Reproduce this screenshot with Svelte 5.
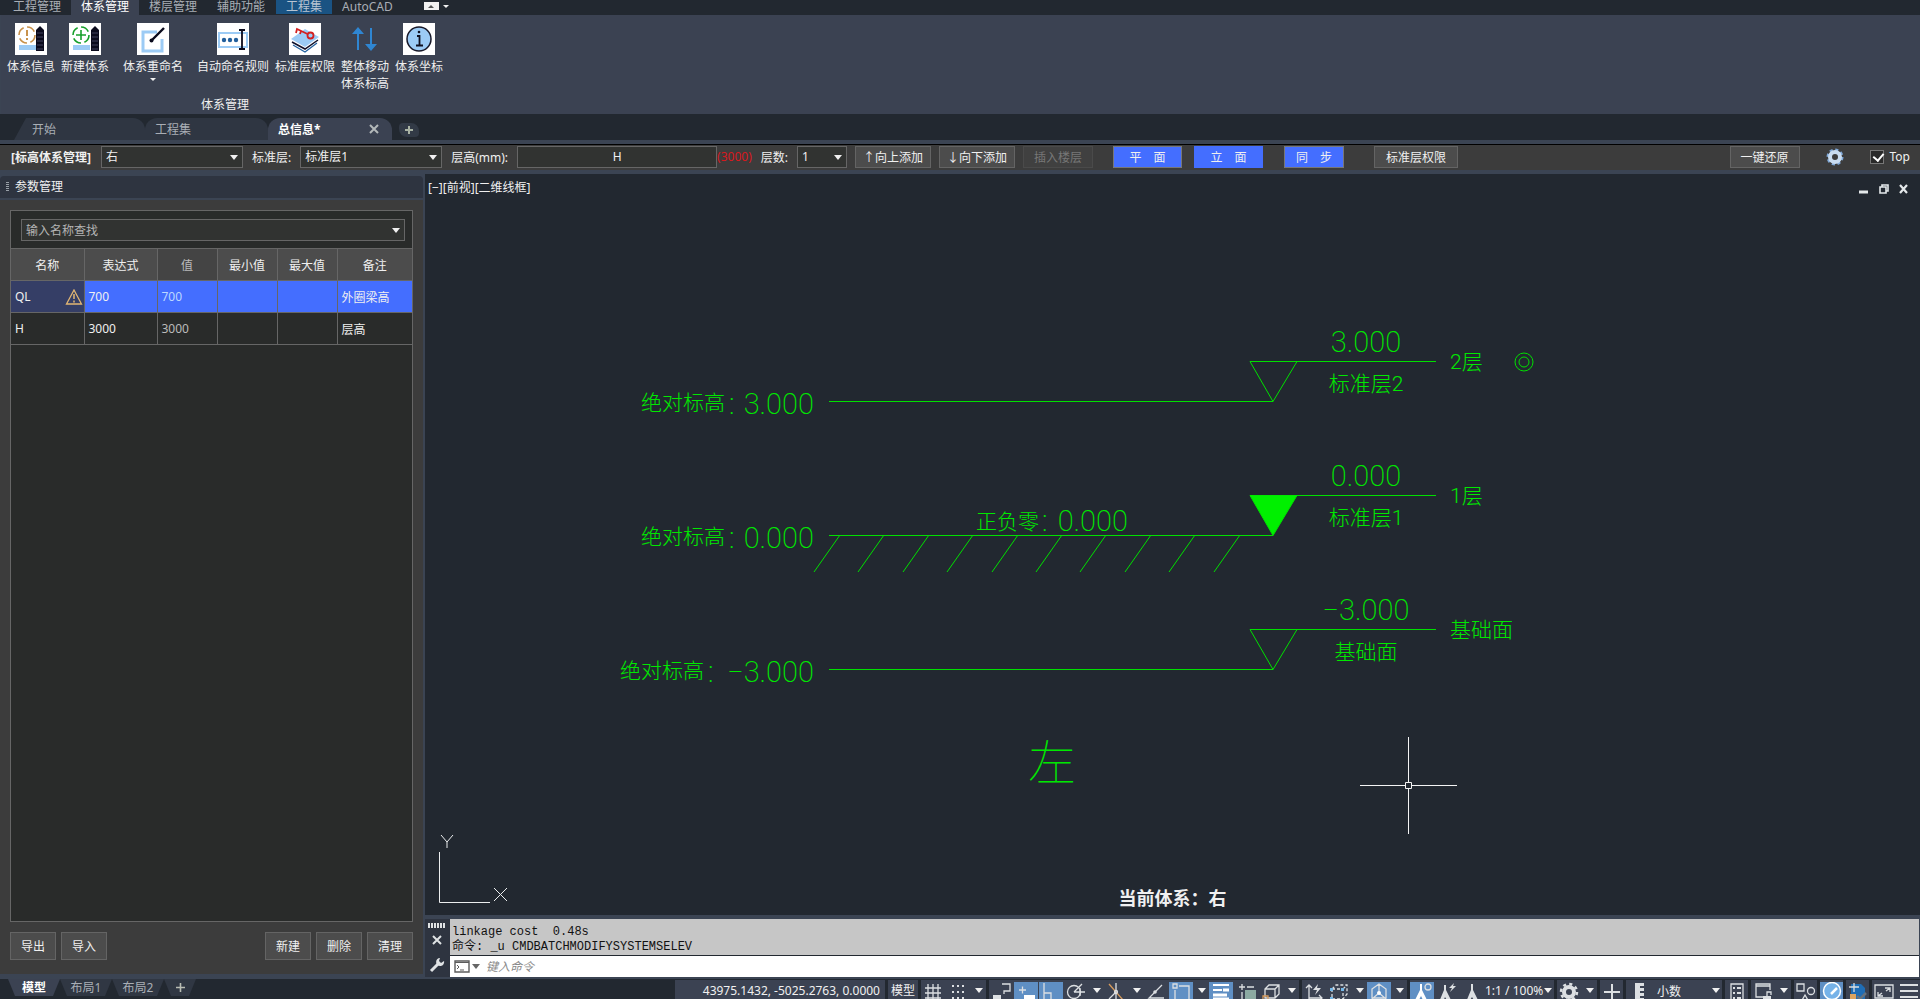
<script>
    const menuTabs = ["工程管理", "体系管理", "楼层管理", "辅助功能", "工程集", "AutoCAD"];

    const ribbonButtons = [
        { icon: "info", label: "体系信息", width: "w54" },
        { icon: "create", label: "新建体系", width: "w54" },
        { icon: "rename", label: "体系重命名", width: "w82", caret: true },
        { icon: "autoname", label: "自动命名规则", width: "w78" },
        { icon: "layers", label: "标准层权限", width: "w66" },
        { icon: "move", label: "整体移动体系标高", width: "w54" },
        { icon: "coord", label: "体系坐标", width: "w54" },
    ];

    const ribbonIcons = {
        info: `<rect width="32" height="32" fill="#fff"/><circle cx="12" cy="12" r="8" fill="none" stroke="#c8924c" stroke-width="1.6" stroke-dasharray="9 3.5"/><path d="M12 7v6M12 15v2" stroke="#c8924c" stroke-width="2"/><path d="M4 22h17v5H4z" fill="#9ccbf5"/><path d="M21 7l4-4 4 4v21h-8z" fill="#0a0a1c"/><path d="M22 10h6M22 14h6M22 18h6M22 22h6M22 26h6" stroke="#41415c"/>`,
        create: `<rect width="32" height="32" fill="#fff"/><circle cx="12" cy="12" r="8" fill="none" stroke="#18a02c" stroke-width="1.6" stroke-dasharray="9 3.5"/><path d="M12 7v10M7 12h10" stroke="#18a02c" stroke-width="1.6"/><path d="M4 22h17v5H4z" fill="#9ccbf5"/><path d="M22 7l4-4 4 4v21h-8z" fill="#0a0a1c"/><path d="M23 10h6M23 14h6M23 18h6M23 22h6M23 26h6" stroke="#41415c"/>`,
        rename: `<rect width="32" height="32" fill="#fff"/><path d="M20 9H6v19h19V16" fill="none" stroke="#9ccbf5" stroke-width="3"/><path d="M15 17L27 5" stroke="#0a0a1c" stroke-width="2.4"/><circle cx="14.500" cy="17.500" r="2" fill="#0a0a1c"/>`,
        autoname: `<rect width="32" height="32" fill="#fff"/><path d="M2 10h28v14H2z" fill="none" stroke="#9ccbf5" stroke-width="2"/><circle cx="7" cy="17" r="2.200" fill="#225f9c"/><circle cx="13" cy="17" r="2.200" fill="#225f9c"/><circle cx="19" cy="17" r="2.200" fill="#225f9c"/><path d="M25 7v18M22 7h6M22 26h6" stroke="#0a0a1c" stroke-width="1.800" fill="none"/>`,
        layers: `<rect width="32" height="32" fill="#fff"/><path d="M2 16l14-10 14 8-14 10z" fill="#9ccbf5"/><path d="M3 19l13 7 13-9" fill="none" stroke="#10102a" stroke-width="1.500"/><path d="M4 22l12 7 12-9" fill="none" stroke="#24629f" stroke-width="1.300"/><circle cx="21.500" cy="12.500" r="3" fill="none" stroke="#d42020" stroke-width="1.800"/><path d="M18.500 11L8 6l-1 4M12 8l-1 3" fill="none" stroke="#d42020" stroke-width="1.800"/>`,
        move: `<path d="M8 27V11H3l6-7 6 7h-5v16z" fill="#2f86d2"/><path d="M21 5v16h-5l6 7 6-7h-5V5z" fill="#2f86d2"/>`,
        coord: `<rect width="32" height="32" fill="#fff"/><circle cx="16" cy="16" r="12" fill="#9ccbf5" stroke="#181828" stroke-width="1.500"/><path d="M14 13h2.500v9M13 22.500h7" fill="none" stroke="#101020" stroke-width="1.800"/><circle cx="16" cy="9" r="1.300" fill="#101020"/>`,
    };

    let system = $state("右");
    let standard = $state("标准层1");
    let floors = $state("1");
    let stayOnTop = $state(true);

    const columns = ["名称", "表达式", "值", "最小值", "最大值", "备注"];
    const params = [
        { name: "QL", expr: "700", value: "700", note: "外圈梁高", warn: true, selected: true },
        { name: "H", expr: "3000", value: "3000", note: "层高" },
    ];

    // x is the start of the left caption, y the lower line of each elevation mark
    const levels = [
        { x: 216, y: 227, elev: "3.000", name: "标准层2", floor: "2层", current: true },
        { x: 216, y: 361, elev: "0.000", name: "标准层1", floor: "1层", zero: true },
        { x: 195, y: 495, elev: "−3.000", name: "基础面", floor: "基础面" },
    ];
    const hatches = Array.from({ length: 10 }, (_, i) => 415 + Math.round(i * 44.4));

    const s = `fill="none" stroke="#dcdfe2" stroke-width="1.3"`;
    const statusIcons = {
        grid: `<path d="M3 8h16M3 13h16M3 18h16M6 4v18M11 4v18M16 4v18" ${s}/>`,
        snap: `<path d="M5 6h12M5 12h12M5 18h12" ${s} stroke-dasharray="2 3" style="stroke-width:2"/>`,
        infer: `<path d="M12 4h8v7h-6v3" ${s}/><path d="M3 15h8v8H3z" fill="#dcdfe2"/>`,
        dyn: `<path d="M4 10h7M7.500 6.500v7" ${s}/><path d="M9 15h11v4H9z" fill="#fff"/>`,
        ortho: `<path d="M4 3v20M4 13h7v8" ${s}/>`,
        polar: `<circle cx="9" cy="12" r="6.500" ${s}/><path d="M9 12L17 4M9 12h11M15 8v8" ${s}/>`,
        iso: `<path d="M4 4l14 16" stroke="#d69a5c" stroke-width="1.300"/><path d="M11 3v18M11 12l-7 7" ${s}/><circle cx="11" cy="12" r="1.500" ${s}/>`,
        track: `<path d="M17 5L4 18h15" ${s}/><circle cx="10" cy="12" r="1.800" fill="#dcdfe2"/>`,
        osnap: `<path d="M3 4h4v4H3zM9 6h10v16M5 10v12" ${s}/>`,
        weight: `<path d="M3 5h16M3 10h9" stroke="#fff" stroke-width="2"/><path d="M3 15h14M3 19h16" stroke="#fff" stroke-width="3"/><path d="M13 10h6" stroke="#fff" stroke-width="3"/>`,
        transp: `<path d="M4 7h6M7 4v6" ${s}/><path d="M10 10h11v12H10z" fill="#8caaa2"/><path d="M12 7h7M7 12v9" ${s}/>`,
        cycle: `<path d="M5 9l4-4h10v9l-4 4H5zM5 9h10v9M15 9l4-4" ${s}/><path d="M3 16h5v6H3z" fill="none" stroke="#d69a5c" stroke-width="1.300"/>`,
        ucs: `<path d="M6 20V5M3 8l3-3 3 3M6 18h13M16 15l3 3-3 3" ${s}/><path d="M15 4l-5 6h4l-2 5 6-7h-4z" fill="#dcdfe2"/>`,
        cube: `<path d="M4 9l4-4h11v9l-4 5H4zM4 9h11v10M15 9l4-4" ${s} stroke-dasharray="3 2"/><path d="M2 8h3v3H2zM13 8h3v3h-3zM2 17h3v3H2z" fill="#74b7e8"/>`,
        gizmo: `<path d="M11 4v9l-7 6M11 13l7 6M4 9l7-5 7 5v9H4z" ${s}/><circle cx="11" cy="13" r="2" fill="#fff"/>`,
        annoVis: `<path d="M9 4v6L3 22h4l3-6 3 6h4l-6-12V4z" fill="#fff"/><circle cx="17" cy="7" r="3" ${s}/>`,
        annoAuto: `<path d="M8 5v5L3 22h4l2-5 3 5h4l-6-12V5z" fill="#dcdfe2"/><path d="M18 3l-5 5h3l-2 4 6-6h-3z" fill="#dcdfe2"/>`,
        anno: `<path d="M10 4v6L5 22h3l3-5 3 5h4l-6-12V4z" fill="#dcdfe2"/>`,
        gear: `<circle cx="11" cy="12" r="5" fill="none" stroke="#dcdfe2" stroke-width="4"/><circle cx="11" cy="12" r="8" fill="none" stroke="#dcdfe2" stroke-width="2.500" stroke-dasharray="3.100 3.180"/>`,
        plus: `<path d="M3 12h16M11 4v18" ${s} style="stroke-width:2"/>`,
        ruler: `<path d="M8 3h9v3h-4v2h4v3h-4v2h4v3h-4v2h4v5H8z" fill="#dcdfe2"/>`,
        list: `<path d="M5 4h12v20H5z" ${s}/><path d="M7 8h2M11 8h4M7 13h2M11 13h4M7 18h2M11 18h4" ${s} style="stroke-width:2"/>`,
        lock: `<path d="M11 17H4V4h14v6M4 6h14" ${s}/><path d="M11 16h8v6h-8z" fill="#dcdfe2"/><path d="M15 16v-4h4v3" ${s}/>`,
        shapes: `<path d="M2 4h7v7H2zM10 15l-4 7h8z" ${s}/><circle cx="16" cy="11" r="3.500" ${s}/>`,
        perf: `<circle cx="11" cy="11" r="8.500" fill="#76b2e8" stroke="#fff" stroke-width="1.500"/><path d="M10 14l6-6" stroke="#fff" stroke-width="2.500"/>`,
        drawing: `<path d="M4 4h10l4 4v12H4z" fill="#1f6db5"/><path d="M2 7h10M7 3v9" ${s}/><path d="M3 14h6v6H3z" fill="#dca460"/><path d="M10 16l3 3 6-6" fill="none" stroke="#66727e" stroke-width="2.500"/>`,
        full: `<path d="M2 5h18v13H2z" ${s}/><path d="M12 8h5v4M17 8l-4 3M5 12v4h5M5 16l4-3" ${s}/>`,
        menu: `<path d="M2 5h18M2 11h18M2 17h18" ${s} style="stroke-width:2"/>`,
    };

    const i = (icon, on = false) => ({ icon, on });
    const caret = { caret: true };
    const statusGroups = [
        [i("grid"), i("snap"), caret],
        [
            i("infer"), i("dyn", true), i("ortho", true), i("polar"), caret, i("iso"), caret,
            i("track"), i("osnap", true), caret, i("weight", true), i("transp"), i("cycle"), caret,
        ],
        [i("ucs"), i("cube"), caret, i("gizmo", true), caret],
        [i("annoVis", true), i("annoAuto"), i("anno"), { text: "1:1 / 100%" }],
        [i("gear"), caret],
        [i("plus")],
        [i("ruler"), { text: "小数", wide: true }],
        [i("list")],
        [i("lock"), caret],
        [i("shapes")],
        [i("perf", true)],
        [i("drawing")],
        [i("full"), i("menu")],
    ];
</script>

<div class="app">
    <nav class="menu">
        {#each menuTabs as tab, n}
            <button class:active={n === 1} class:blue={n === 4}>{tab}</button>
        {/each}
        <span class="collapse"><i></i></span>
        <i class="caret small"></i>
    </nav>

    <section class="ribbon">
        <div class="ribbon-group">
            <div class="ribbon-buttons">
                {#each ribbonButtons as b}
                    <button class={b.width}>
                        <svg width="32" height="32" viewBox="0 0 32 32">{@html ribbonIcons[b.icon]}</svg>
                        <span>{b.label}</span>
                        {#if b.caret}<i class="caret small"></i>{/if}
                    </button>
                {/each}
            </div>
            <div class="ribbon-title">体系管理</div>
        </div>
    </section>

    <nav class="files">
        <button class="file first">开始</button>
        <button class="file">工程集</button>
        <button class="file active">
            总信息*
            <svg width="10" height="10" viewBox="0 0 10 10"><path d="M1 1l8 8M9 1L1 9" stroke="#b4b9ba" stroke-width="2" /></svg>
        </button>
        <button class="file-add" aria-label="新建文件">
            <svg width="10" height="10" viewBox="0 0 10 10"><path d="M5 1v8M1 5h8" stroke="#a9b3a4" stroke-width="2" /></svg>
        </button>
    </nav>

    <div class="toolbar">
        <b>[标高体系管理]</b>
        <span class="select">
            <select bind:value={system} aria-label="标高体系"><option>右</option><option>左</option></select>
            <i class="caret"></i>
        </span>
        <label for="standard">标准层:</label>
        <span class="select">
            <select id="standard" bind:value={standard}><option>标准层1</option><option>标准层2</option></select>
            <i class="caret"></i>
        </span>
        <label for="height">层高(mm):</label>
        <span class="height"><input id="height" value="H" /><em>(3000)</em></span>
        <label for="floors">层数:</label>
        <span class="select narrow">
            <select id="floors" bind:value={floors}><option>1</option><option>2</option></select>
            <i class="caret"></i>
        </span>
        <div class="insert">
            <button>↑向上添加</button>
            <button>↓向下添加</button>
            <button disabled>插入楼层</button>
        </div>
        <div class="views">
            <button class="primary lined">平&emsp;面</button>
            <button class="primary">立&emsp;面</button>
            <button class="primary lined sync">同&emsp;步</button>
            <button class="rights">标准层权限</button>
        </div>
        <div class="right">
            <button>一键还原</button>
            <svg width="18" height="18" viewBox="0 0 18 18">
                <circle cx="9" cy="9" r="7" fill="none" stroke="#7fa8d8" stroke-width="3" stroke-dasharray="3 2.500" />
                <circle cx="9" cy="9" r="5" fill="none" stroke="#c9dcf0" stroke-width="4" />
            </svg>
            <label class="top"><input type="checkbox" bind:checked={stayOnTop} />Top</label>
        </div>
    </div>

    <div class="main">
        <aside>
            <header><i class="grip"></i>参数管理</header>
            <div class="panel">
                <div class="box">
                    <div class="search">
                        <input placeholder="输入名称查找" aria-label="输入名称查找" />
                        <i class="caret"></i>
                    </div>
                    <table>
                        <thead>
                            <tr>
                                {#each columns as c}<th class:dim={c === "值"}>{c}</th>{/each}
                            </tr>
                        </thead>
                        <tbody>
                            {#each params as p}
                                <tr class:selected={p.selected}>
                                    <td>
                                        <div class="name">
                                            {p.name}
                                            {#if p.warn}
                                                <svg width="18" height="16" viewBox="0 0 18 16">
                                                    <path d="M9 1l7.500 14h-15z" fill="none" stroke="#e2b673" stroke-width="1.300" />
                                                    <path d="M9 5v5M9 11.500v2" stroke="#e2b673" stroke-width="1.500" />
                                                </svg>
                                            {/if}
                                        </div>
                                    </td>
                                    <td>{p.expr}</td>
                                    <td class="value">{p.value}</td>
                                    <td></td>
                                    <td></td>
                                    <td>{p.note}</td>
                                </tr>
                            {/each}
                        </tbody>
                    </table>
                </div>
                <footer>
                    <button>导出</button>
                    <button>导入</button>
                    <span></span>
                    <button>新建</button>
                    <button>删除</button>
                    <button>清理</button>
                </footer>
            </div>
        </aside>

        <div class="work">
            <div class="canvas">
                <svg class="drawing" width="100%" height="100%">
                    {#each levels as l}
                        <path d="M404 {l.y + 0.5}H848M825 {l.y - 39.5}H1011" />
                        <path class:solid={l.zero} d="M825 {l.y - 39.5}L848 {l.y + 0.5}L872 {l.y - 39.5}" />
                        <text x={l.x} y={l.y + 9} class="cjk">绝对标高</text>
                        <text x={l.x + 88} y={l.y + 13} class="num">:</text>
                        <text x="389" y={l.y + 13} class="num" text-anchor="end">{l.elev}</text>
                        <text x="941" y={l.y - 49} class="num" text-anchor="middle">{l.elev}</text>
                        <text x="941" y={l.y - 10} class="cjk" text-anchor="middle">{l.name}</text>
                        <text x="1025" y={l.y - 32} class="cjk">{l.floor}</text>
                        {#if l.current}
                            <circle cx="1099" cy={l.y - 39} r="9" />
                            <circle cx="1099" cy={l.y - 39} r="5" />
                        {/if}
                    {/each}
                    {#each hatches as x}
                        <path d="M{x} 361L{x - 26} 398" />
                    {/each}
                    <text x="551" y="355" class="cjk">正负零</text>
                    <text x="617" y="357" class="num">:</text>
                    <text x="703" y="357" class="num" text-anchor="end">0.000</text>
                    <text x="627" y="606" class="side" text-anchor="middle">左</text>
                    <g class="cursor">
                        <path d="M935 611.500h45M987 611.500h45M983.500 563v45M983.500 615v45M980.500 608.500h6v6h-6z" />
                    </g>
                </svg>
                <span class="view-label">[−][前视][二维线框]</span>
                <div class="window-buttons">
                    <svg width="50" height="12" viewBox="0 0 50 12">
                        <path d="M1 9h9" stroke="#e4e8ea" stroke-width="3" />
                        <path d="M22 4h6v6h-6zM24 4V2h6v6h-2" fill="none" stroke="#e4e8ea" stroke-width="1.600" />
                        <path d="M42 2l7 8M49 2l-7 8" stroke="#e4e8ea" stroke-width="2.200" />
                    </svg>
                </div>
                <svg class="axes" width="70" height="72" viewBox="0 0 70 72">
                    <path d="M1.500 20v50.500H52M3 3l6 7 6-7M9 10v6M56 56l13 13M69 56L56 69" fill="none" stroke="#eceeef" />
                </svg>
                <span class="current">当前体系：右</span>
            </div>

            <div class="command">
                <div class="command-side">
                    <i class="dots"></i>
                    <svg width="10" height="10" viewBox="0 0 10 10"><path d="M1 1l8 8M9 1L1 9" stroke="#dfe2e4" stroke-width="2" /></svg>
                    <svg width="16" height="16" viewBox="0 0 16 16">
                        <path d="M2 14l8-8" stroke="#dfe2e4" stroke-width="3" />
                        <path d="M15 4a4 4 0 1 1-4-3l-1 3 2 2z" fill="#dfe2e4" />
                    </svg>
                </div>
                <div class="command-body">
                    <pre>linkage cost  0.48s
命令: _u CMDBATCHMODIFYSYSTEMSELEV</pre>
                    <div class="prompt">
                        <svg width="16" height="13" viewBox="0 0 16 13">
                            <path d="M1 1h14v11H1z" fill="none" stroke="#5c5c5c" stroke-width="1.400" />
                            <path d="M1 2.500h14" stroke="#5c5c5c" />
                            <path d="M3 5l2 2-2 2M6 10h4" fill="none" stroke="#5c5c5c" />
                        </svg>
                        <i class="caret dark"></i>
                        <input placeholder="键入命令" aria-label="键入命令" />
                    </div>
                </div>
            </div>
        </div>
    </div>

    <div class="bottom">
        <nav class="layouts">
            <button class="active">模型</button>
            <button>布局1</button>
            <button>布局2</button>
            <button class="add" aria-label="新建布局">
                <svg width="9" height="9" viewBox="0 0 9 9"><path d="M4.500 0v9M0 4.500h9" stroke="#b9bdb4" stroke-width="1.600" /></svg>
            </button>
        </nav>
        <div class="status">
            <div class="group coords">43975.1432, -5025.2763, 0.0000</div>
            <div class="group model">模型</div>
            {#each statusGroups as group}
                <div class="group">
                    {#each group as item}
                        {#if item.caret}
                            <span class="drop"><i class="caret"></i></span>
                        {:else if item.text}
                            <button class="text" class:wide={item.wide}>{item.text}<i class="caret"></i></button>
                        {:else}
                            <button class="icon" class:on={item.on} aria-label={item.icon}>
                                <svg width="22" height="18" viewBox="0 2 22 18">{@html statusIcons[item.icon]}</svg>
                            </button>
                        {/if}
                    {/each}
                </div>
            {/each}
        </div>
    </div>
</div>

<style>
    :global(body) {
        margin: 0;
        background: #222830;
    }

    .app,
    .app button,
    .app input,
    .app select {
        font-family: "Noto Sans", "Noto Sans CJK SC", sans-serif;
        font-size: 12px;
    }

    .app {
        display: flex;
        flex-direction: column;
        height: 100vh;
        overflow: hidden;
        color: #f0f0f0;
        background: #3b4453;
        white-space: nowrap;
    }

    .app * {
        box-sizing: border-box;
    }

    button {
        margin: 0;
        padding: 0;
        border: 0;
        color: inherit;
        background: none;
    }

    .caret {
        flex: none;
        border: 4px solid transparent;
        border-top: 5px solid #f0f0f0;
        border-bottom: 0;
    }

    .caret.small {
        border-width: 3px 3px 0;
    }

    .caret.dark {
        border-top-color: #666;
    }

    /* top menu */
    .menu {
        display: flex;
        flex: none;
        height: 15px;
        padding-left: 3px;
        color: #a9aeb5;
        background: #222830;
    }

    .menu button {
        display: flex;
        flex: none;
        align-items: flex-start;
        height: 15px;
        padding: 0 10px;
        line-height: 14px;
    }

    .menu .active {
        color: #fff;
        background: #3b4252;
    }

    .menu .blue {
        height: 14px;
        margin-left: 1px;
        color: #b8c4d2;
        background: #1a5383;
    }

    .collapse {
        display: flex;
        align-items: center;
        justify-content: center;
        width: 15px;
        height: 8px;
        margin: 2px 4px 0 21px;
        background: #f2f2f2;
    }

    .collapse i {
        border: 3px solid transparent;
        border-top: 0;
        border-bottom-color: #555;
    }

    .menu > .caret {
        align-self: flex-start;
        margin-top: 5px;
    }

    .ribbon {
        flex: none;
        height: 99px;
        margin-left: 1px;
        background: #3b4252;
    }

    .ribbon-group {
        display: flex;
        flex-direction: column;
        width: 448px;
        height: 100%;
        padding: 8px 0 1px;
    }

    .ribbon-buttons {
        display: flex;
        flex: 1;
        padding-left: 3px;
    }

    .ribbon-buttons button {
        display: flex;
        flex-direction: column;
        align-items: center;
        line-height: 17px;
        white-space: normal;
    }

    .ribbon-buttons span {
        margin-top: 3px;
    }

    .ribbon-buttons .caret {
        margin-top: 3px;
    }

    .w54 {
        width: 54px;
    }

    .w66 {
        width: 66px;
    }

    .w78 {
        width: 78px;
    }

    .w82 {
        width: 82px;
    }

    .ribbon-title {
        line-height: 17px;
        text-align: center;
    }

    /* file tabs */
    .files {
        display: flex;
        flex: none;
        align-items: flex-end;
        height: 26px;
        padding-left: 14px;
        background: #222830;
    }

    .file {
        display: flex;
        align-items: center;
        justify-content: space-between;
        width: 123px;
        height: 22px;
        padding: 0 13px 0 10px;
        color: #a9aeb5;
        background: #2f3642;
        border-radius: 12px 12px 0 0;
    }

    .file.first {
        width: 131px;
        padding-left: 18px;
        clip-path: polygon(12px 0, 100% 0, 100% 100%, 0 100%);
    }

    .file.active {
        width: 124px;
        color: #fff;
        font-weight: bold;
        background: #3b4252;
    }

    .file-add {
        display: flex;
        align-items: center;
        justify-content: center;
        width: 20px;
        height: 14px;
        margin: 0 0 3px 7px;
        background: #323a46;
        border-radius: 4px 8px 4px 8px;
    }

    /* system toolbar */
    .toolbar {
        display: flex;
        flex: none;
        align-items: center;
        height: 26px;
        margin-top: 4px;
        padding: 0 10px 2px 11px;
        background: #3c3c3c;
        border-top: 1px solid #000;
    }

    .toolbar b {
        width: 90px;
    }

    .select {
        position: relative;
        width: 142px;
        margin-right: 9px;
    }

    .select.narrow {
        width: 50px;
        margin-right: 8px;
    }

    .select select {
        display: block;
        width: 100%;
        height: 22px;
        padding: 0 4px;
        color: #f0f0f0;
        background: #313331;
        border: 1px solid #666;
        border-radius: 0;
        appearance: none;
    }

    .select .caret {
        position: absolute;
        top: 9px;
        right: 5px;
    }

    .toolbar > label {
        margin-right: 9px;
    }

    .height {
        display: flex;
        align-items: center;
        margin-right: 9px;
    }

    .height input {
        width: 200px;
        height: 22px;
        color: #f0f0f0;
        text-align: center;
        background: #313331;
        border: 1px solid #666;
    }

    .height em {
        color: #d8181c;
        font-style: normal;
    }

    .toolbar button,
    footer button {
        height: 22px;
        background: #4c4c4c;
        border: 1px solid #646464;
    }

    .insert,
    .views,
    .right {
        display: flex;
        align-items: center;
    }

    .insert {
        gap: 8px;
        margin-right: 20px;
    }

    .insert button {
        width: 76px;
    }

    .insert button:disabled {
        width: 70px;
        color: #777;
        background: #404040;
        border-color: #4a4a4a;
    }

    .views {
        gap: 12px;
    }

    .views .primary {
        width: 69px;
        background: #446eff;
        border-color: #446eff;
    }

    .views .lined {
        border-color: #777;
    }

    .views .sync {
        width: 60px;
        margin-left: 9px;
    }

    .views .rights {
        width: 84px;
        margin-left: 18px;
    }

    .right {
        gap: 26px;
        margin-left: auto;
    }

    .right button {
        width: 70px;
    }

    .top {
        display: flex;
        gap: 6px;
        align-items: center;
    }

    .top input {
        width: 14px;
        height: 14px;
        margin: 0;
        background: #2a2a2a;
        border: 1px solid #777;
        appearance: none;
    }

    .top input:checked::before {
        content: "";
        display: block;
        width: 5px;
        height: 8px;
        margin: 0 0 0 4px;
        border: solid #fff;
        border-width: 0 2px 2px 0;
        transform: rotate(40deg);
    }

    .main {
        display: flex;
        flex: 1;
        min-height: 0;
        margin-top: 4px;
    }

    /* parameter panel */
    aside {
        display: flex;
        flex: none;
        flex-direction: column;
        width: 423px;
        margin: 2px 2px 5px 0;
    }

    aside header {
        display: flex;
        gap: 6px;
        align-items: center;
        height: 22px;
        padding: 0 0 2px 6px;
        background: #2e3440;
        border-radius: 4px 4px 0 0;
    }

    .grip {
        width: 3px;
        height: 9px;
        background: repeating-linear-gradient(#99a0a8 0 1px, transparent 1px 2px);
    }

    .panel {
        display: flex;
        flex: 1;
        flex-direction: column;
        margin-top: 2px;
        padding: 10px;
        background: #3c3c3c;
    }

    .box {
        flex: 1;
        background: #292b2a;
        border: 1px solid #666;
    }

    .search {
        display: flex;
        align-items: center;
        height: 22px;
        margin: 8px 7px 7px 10px;
        padding-right: 4px;
        background: #313331;
        border: 1px solid #666;
    }

    .search input {
        flex: 1;
        min-width: 0;
        height: 20px;
        padding: 0 4px;
        color: #f0f0f0;
        background: none;
        border: 0;
    }

    .search input::placeholder {
        color: #b4b4b4;
    }

    table {
        width: 100%;
        border-collapse: collapse;
        table-layout: fixed;
    }

    th,
    td {
        width: 60px;
        height: 32px;
        padding: 0 4px;
        border: 1px solid #666;
        border-width: 1px 0 1px 1px;
        text-align: left;
    }

    th:first-child,
    th:nth-child(2) {
        width: 73px;
    }

    th:last-child {
        width: auto;
    }

    th:first-child,
    td:first-child {
        border-left: 0;
    }

    th {
        font-weight: normal;
        text-align: center;
        background: #4c4c4c;
    }

    th.dim {
        color: #bbb;
        background: #444;
    }

    .value {
        color: #bbb;
    }

    .name {
        display: flex;
        align-items: center;
        justify-content: space-between;
        margin-right: -3px;
    }

    .selected td {
        background: #446eff;
    }

    .selected td:first-child {
        background: #353e66;
    }

    .selected .value {
        color: #bcd8ff;
    }

    footer {
        display: flex;
        gap: 5px;
        padding: 10px 0 4px;
    }

    footer span {
        flex: 1;
    }

    footer button {
        width: 46px;
        height: 28px;
    }

    /* drawing area */
    .work {
        display: flex;
        flex: 1;
        flex-direction: column;
        min-width: 0;
    }

    .canvas {
        position: relative;
        flex: 1;
        min-height: 0;
        overflow: hidden;
        background: #222830;
    }

    .drawing {
        position: absolute;
        inset: 0;
    }

    .drawing path,
    .drawing circle {
        fill: none;
        stroke: #00e000;
    }

    .drawing .solid {
        fill: #00f000;
    }

    .drawing .cursor path {
        stroke: #f4f4f4;
    }

    .drawing text {
        fill: #00e800;
        font-weight: 300;
    }

    .drawing .num {
        font-family: Roboto, sans-serif;
        font-size: 29px;
        font-weight: 200;
    }

    .drawing .cjk {
        font-family: Roboto, "Noto Sans CJK SC", sans-serif;
        font-size: 21px;
    }

    .drawing .side {
        font-family: "Noto Sans CJK SC", sans-serif;
        font-size: 48px;
        font-weight: 100;
    }

    .view-label {
        position: absolute;
        top: 4px;
        left: 3px;
    }

    .window-buttons {
        position: absolute;
        top: 8px;
        right: 12px;
    }

    .axes {
        position: absolute;
        bottom: 11px;
        left: 13px;
    }

    .current {
        position: absolute;
        right: 0;
        bottom: 5px;
        left: 0;
        font-family: "Noto Sans CJK SC", sans-serif;
        font-size: 18px;
        font-weight: bold;
        line-height: 26px;
        text-align: center;
    }

    .command {
        display: flex;
        flex: none;
        height: 64px;
        padding: 4px 1px 2px 0;
    }

    .command-side {
        display: flex;
        flex-direction: column;
        align-items: center;
        width: 25px;
        padding: 4px 2px 0 0;
        background: #2e3440;
    }

    .dots {
        width: 17px;
        height: 5px;
        margin-bottom: 7px;
        background: repeating-linear-gradient(90deg, #dfe2e4 0 2px, transparent 2px 3px);
    }

    .command-side svg:last-child {
        margin-top: 12px;
    }

    .command-body {
        flex: 1;
        background: #c6c6c6;
    }

    pre {
        height: 36px;
        margin: 0;
        padding: 6px 0 0 2px;
        color: #111;
        font-family: "Liberation Mono", "Noto Sans CJK SC", monospace;
        font-size: 12px;
        line-height: 15px;
    }

    .prompt {
        display: flex;
        align-items: center;
        height: 22px;
        padding-left: 4px;
        background: #fff;
        border-top: 1px solid #222830;
    }

    .prompt .caret {
        margin: 0 6px 0 2px;
    }

    .prompt input {
        flex: 1;
        height: 20px;
        padding: 0;
        font-style: italic;
        border: 0;
    }

    .prompt input::placeholder {
        color: #888;
    }

    /* layout tabs and status bar */
    .bottom {
        display: flex;
        flex: none;
        justify-content: space-between;
        height: 20px;
        background: #222830;
    }

    .layouts {
        display: flex;
        padding-left: 8px;
    }

    .layouts button {
        width: 52px;
        height: 17px;
        color: #a9aeb5;
        line-height: 17px;
        background: #303743;
        clip-path: polygon(0 0, 100% 0, calc(100% - 7px) 100%, 7px 100%);
    }

    .layouts .active {
        color: #fff;
        font-weight: bold;
        background: #3b4252;
    }

    .layouts .add {
        width: 32px;
    }

    .status {
        display: flex;
        gap: 3px;
        padding-top: 1px;
    }

    .group {
        display: flex;
        flex: none;
        align-items: flex-end;
        height: 19px;
        line-height: 17px;
        background: #3b4252;
    }

    .coords {
        justify-content: flex-end;
        width: 210px;
        padding-right: 5px;
    }

    .model {
        padding: 0 3px;
    }

    .icon {
        width: 24px;
        height: 17px;
        margin-right: 1px;
        overflow: hidden;
    }

    .icon:last-child {
        width: 23px;
        margin-right: 0;
    }

    .icon svg {
        display: block;
        margin: 0 auto;
    }

    .icon.on {
        background: #5f8fc4;
    }

    .drop {
        display: flex;
        align-items: center;
        justify-content: center;
        width: 15px;
        height: 17px;
    }

    .text {
        display: flex;
        align-items: center;
        justify-content: space-between;
        width: 69px;
        height: 17px;
        padding: 0 2px 0 0;
    }

    .text.wide {
        width: 71px;
        padding-left: 6px;
    }
</style>
